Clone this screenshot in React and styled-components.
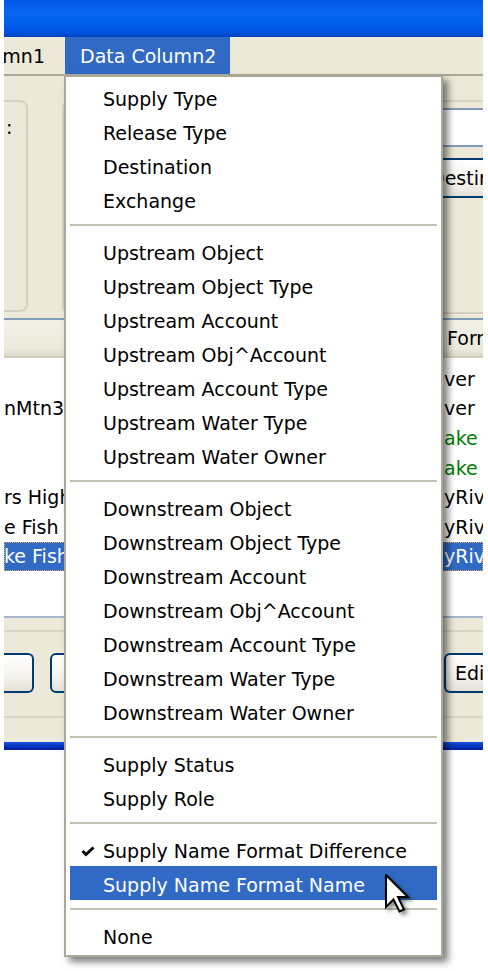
import React from 'react';
import styled, { createGlobalStyle } from 'styled-components';

const GlobalStyle = createGlobalStyle`
  html, body {
    margin: 0;
    padding: 0;
    background: #fff;
  }
  body {
    font-family: "DejaVu Sans", Tahoma, sans-serif;
    font-size: 19px;
    color: #000;
  }
`;

const Page = styled.div`
  position: relative;
  width: 488px;
  height: 971px;
  overflow: hidden;
  background: #fff;
  padding-left: 4px;
  box-sizing: border-box;
`;

const Window = styled.div`
  width: 479px;
  overflow: hidden;
  background: #ece9d8;
`;

const TitleBar = styled.div`
  height: 37px;
  background: linear-gradient(
    #0058e6 0%,
    #0a66f0 35%,
    #0062ee 60%,
    #0052dc 90%,
    #0040b8 100%
  );
`;

const MenuBar = styled.div`
  display: flex;
  height: 37px;
  border-bottom: 2px solid #aca899;
  background: #ece9d8;
`;

const ClippedMenuItem = styled.div`
  width: 61px;
  display: flex;
  justify-content: flex-end;
  align-items: center;
  overflow: hidden;
  white-space: nowrap;
  padding-right: 20px;
  box-sizing: border-box;
`;

const MenuBarItem = styled.div`
  display: flex;
  align-items: center;
  padding: 0 14px 0 15px;
  white-space: nowrap;
  background: ${p => (p.active ? '#316ac5' : 'transparent')};
  color: ${p => (p.active ? '#fff' : '#000')};
`;

const TopPanel = styled.div`
  display: flex;
  height: 242px;
  padding-top: 24px;
  box-sizing: border-box;
`;

const SideGroup = styled.div`
  width: 24px;
  height: 212px;
  border: 2px solid #d5d2c2;
  border-left: none;
  border-radius: 0 8px 8px 0;
  padding: 14px 0 0 2px;
  box-sizing: border-box;
`;

const MainGroup = styled.div`
  flex: 1;
  height: 214px;
  margin-left: 34px;
  border: 2px solid #d5d2c2;
  border-right: none;
  border-radius: 8px 0 0 8px;
  padding-top: 6px;
  box-sizing: border-box;
  display: flex;
  flex-direction: column;
  align-items: flex-end;
`;

const TextBox = styled.div`
  width: 300px;
  height: 39px;
  background: #fff;
  border: 2px solid #7f9db9;
  border-right: none;
  box-sizing: border-box;
`;

const Button = styled.div`
  display: flex;
  align-items: center;
  width: ${p => p.width}px;
  height: 40px;
  padding-left: ${p => p.pad || 0}px;
  border: 2px solid #003c74;
  ${p => p.openRight && 'border-right: none;'}
  ${p => p.openLeft && 'border-left: none;'}
  border-radius: ${p =>
    p.openRight ? '6px 0 0 6px' : p.openLeft ? '0 6px 6px 0' : '6px'};
  background: linear-gradient(#ffffff 0%, #f4f3ee 60%, #e4e2d6 100%);
  box-sizing: border-box;
  white-space: nowrap;
  overflow: hidden;
`;

const GroupButton = styled(Button)`
  margin-top: 11px;
`;

const ListView = styled.div`
  height: 298px;
  border-top: 2px solid #7f9db9;
  background: #fff;
  box-sizing: border-box;
`;

const ListHeader = styled.div`
  display: flex;
  height: 38px;
  background: linear-gradient(#f2f1e8 0%, #ebeadb 80%, #dcd9c8 100%);
  border-bottom: 2px solid #d0cdbd;
  box-sizing: border-box;
`;

const HeaderCell = styled.div`
  display: flex;
  align-items: center;
  padding-left: 4px;
  overflow: hidden;
  white-space: nowrap;
  ${p => (p.grow ? 'flex: 1;' : `width: ${p.width}px;`)}
  box-sizing: border-box;
`;

const ListBody = styled.div`
  padding-top: 6px;
`;

const Row = styled.div`
  display: flex;
  height: 29.6px;
  align-items: center;
  background: ${p => (p.selected ? '#316ac5' : 'transparent')};
  color: ${p => (p.selected ? '#fff' : '#000')};
  ${p => p.selected && 'outline: 1px dotted #e8b050; outline-offset: -1px;'}
`;

const Cell = styled.div`
  overflow: hidden;
  white-space: nowrap;
  ${p => (p.grow ? 'flex: 1;' : `width: ${p.width}px;`)}
  padding-left: ${p => p.pad || 0}px;
  color: ${p => (p.green && !p.selected ? '#008000' : 'inherit')};
  box-sizing: border-box;
`;

const ButtonPanel = styled.div`
  height: 126px;
  border-top: 2px solid #a7b6cc;
  padding-top: 12px;
  box-sizing: border-box;
`;

const Rule = styled.div`
  height: 2px;
  background: #d8d5c6;
`;

const ButtonRow = styled.div`
  display: flex;
  align-items: center;
  gap: 16px;
  margin: 21px 0 23px;
`;

const Spacer = styled.div`
  flex: 1;
`;

const BottomFrame = styled.div`
  height: 8px;
  background: linear-gradient(#1a52e0, #0030b8 60%, #00209a);
`;

const Dropdown = styled.div`
  position: absolute;
  left: 64px;
  top: 75px;
  width: 379px;
  padding: 3px 4px;
  border: 2px solid #aca899;
  background: #fff;
  box-sizing: border-box;
  box-shadow: 5px 5px 7px rgba(0, 0, 0, 0.5);
`;

const Item = styled.div`
  display: grid;
  grid-template-columns: 33px 1fr;
  align-items: center;
  height: 34px;
  padding-top: 4px;
  box-sizing: border-box;
  white-space: nowrap;
  background: ${p => (p.active ? '#316ac5' : 'transparent')};
  color: ${p => (p.active ? '#fff' : '#000')};
`;

const CheckSlot = styled.div`
  display: flex;
  justify-content: center;
  padding-left: 2px;
`;

const Separator = styled.div`
  display: flex;
  align-items: center;
  height: 18px;

  &::after {
    content: '';
    flex: 1;
    height: 2px;
    background: #c5c2b2;
  }
`;

const Cursor = styled.svg`
  position: absolute;
  left: 385px;
  top: 874px;
  filter: drop-shadow(3px 3px 2px rgba(0, 0, 0, 0.45));
`;

const groups = [
  [{ label: 'Supply Type' }, { label: 'Release Type' }, { label: 'Destination' }, { label: 'Exchange' }],
  [
    { label: 'Upstream Object' },
    { label: 'Upstream Object Type' },
    { label: 'Upstream Account' },
    { label: 'Upstream Obj^Account' },
    { label: 'Upstream Account Type' },
    { label: 'Upstream Water Type' },
    { label: 'Upstream Water Owner' },
  ],
  [
    { label: 'Downstream Object' },
    { label: 'Downstream Object Type' },
    { label: 'Downstream Account' },
    { label: 'Downstream Obj^Account' },
    { label: 'Downstream Account Type' },
    { label: 'Downstream Water Type' },
    { label: 'Downstream Water Owner' },
  ],
  [{ label: 'Supply Status' }, { label: 'Supply Role' }],
  [
    { label: 'Supply Name Format Difference', checked: true },
    { label: 'Supply Name Format Name', active: true },
  ],
  [{ label: 'None' }],
];

const rows = [
  { left: '', right: 'ver' },
  { left: 'nMtn3', right: 'ver' },
  { left: '', right: 'ake', green: true },
  { left: '', right: 'ake', green: true },
  { left: 'rs Highway', right: 'yRiver' },
  { left: 'e Fish Hatchery', right: 'yRiver' },
  { left: 'ke Fish Hatchery', right: 'yRiver', selected: true },
];

const Check = () => (
  <svg width="14" height="11" viewBox="0 0 14 11">
    <path d="M1.5 5 L5 8.5 L12.5 1.5" fill="none" stroke="#000" strokeWidth="3" />
  </svg>
);

const App = () => (
  <Page>
    <GlobalStyle />
    <Window>
      <TitleBar />
      <MenuBar>
        <ClippedMenuItem>Data Column1</ClippedMenuItem>
        <MenuBarItem active>Data Column2</MenuBarItem>
      </MenuBar>

      <TopPanel>
        <SideGroup>:</SideGroup>
        <MainGroup>
          <TextBox />
          <GroupButton width={81} pad={26} openRight>
            Destination
          </GroupButton>
        </MainGroup>
      </TopPanel>

      <ListView>
        <ListHeader>
          <HeaderCell grow />
          <HeaderCell width={40}>Format</HeaderCell>
        </ListHeader>
        <ListBody>
          {rows.map((row, i) => (
            <Row key={i} selected={row.selected}>
              <Cell grow>{row.left}</Cell>
              <Cell width={40} pad={1} green={row.green} selected={row.selected}>
                {row.right}
              </Cell>
            </Row>
          ))}
        </ListBody>
      </ListView>

      <ButtonPanel>
        <Rule />
        <ButtonRow>
          <Button width={30} openLeft />
          <Button width={100} />
          <Spacer />
          <Button width={39} pad={9} openRight>
            Edit
          </Button>
        </ButtonRow>
        <Rule />
      </ButtonPanel>
      <BottomFrame />
    </Window>

    <Dropdown>
      {groups.map((group, gi) => (
        <React.Fragment key={gi}>
          {gi > 0 && <Separator />}
          {group.map(item => (
            <Item key={item.label} active={item.active}>
              <CheckSlot>{item.checked && <Check />}</CheckSlot>
              <span>{item.label}</span>
            </Item>
          ))}
        </React.Fragment>
      ))}
    </Dropdown>

    <Cursor width="26" height="40" viewBox="0 0 26 40">
      <path
        d="M1 1 L1 33 L8.5 25.5 L14.5 37.5 L19 35.5 L13 23 L23 23 Z"
        fill="#fff"
        stroke="#000"
        strokeWidth="2"
        strokeLinejoin="miter"
      />
    </Cursor>
  </Page>
);

export default App;
